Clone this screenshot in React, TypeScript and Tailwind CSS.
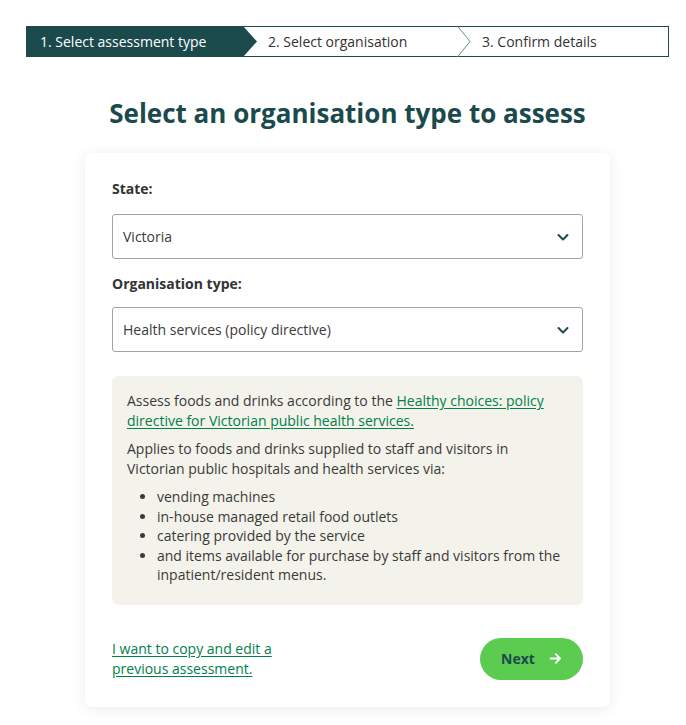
import React from "react";

const teal = "#1b4a4c";

function Chevron() {
  return (
    <svg width="14" height="14" viewBox="0 0 14 14" fill="none">
      <path d="M2.5 5 L7 9.5 L11.5 5" stroke={teal} strokeWidth="2" strokeLinecap="round" strokeLinejoin="round" />
    </svg>
  );
}

function Select({ value }: { value: string }) {
  return (
    <div className="flex h-[45px] items-center justify-between rounded-[3px] border border-[#a3a3a3] bg-white pl-[10px] pr-[12px] text-[14px] text-[#3a3a3a]">
      <span>{value}</span>
      <Chevron />
    </div>
  );
}

export default function App() {
  return (
    <div className="min-h-[725px] bg-white pt-[26px] text-[#333]" style={{ fontFamily: "'Open Sans', 'Noto Sans', sans-serif" }}>
      {/* Stepper */}
      <div className="ml-[26px] flex h-[31px] w-[643px] border border-[#1b4a4c] text-[14px]">
        <div className="relative flex w-[216px] items-center bg-[#1b4a4c] pl-[13px] text-white">
          <span>1. Select assessment type</span>
          <svg className="absolute left-[215px] top-[-1px]" width="15" height="31" viewBox="0 0 15 31">
            <polygon points="0,0 1,0 15,15.5 1,31 0,31" fill="#1b4a4c" />
          </svg>
        </div>
        <div className="relative flex w-[215px] items-center pl-[25px] text-[#333]">
          <span>2. Select organisation</span>
          <svg className="absolute right-[-13px] top-[-1px]" width="14" height="31" viewBox="0 0 14 31">
            <polyline points="0.5,0 13,15.5 0.5,31" fill="none" stroke="#6b8a8a" strokeWidth="1" />
          </svg>
        </div>
        <div className="flex flex-1 items-center pl-[24px] text-[#333]">
          <span>3. Confirm details</span>
        </div>
      </div>

      <div className="ml-[85px] w-[525px]">
        <h1 className="mt-[38px] text-center text-[26px] font-bold leading-[36px] text-[#1b4a4c]">
          Select an organisation type to assess
        </h1>

        <div className="mt-[22px] rounded-[6px] bg-white px-[27px] pb-[27px] pt-[26px] shadow-[0_2px_14px_rgba(0,0,0,0.08)]">
          <div className="text-[14px] font-bold leading-[20px] text-[#333]">State:</div>
          <div className="mt-[15px]">
            <Select value="Victoria" />
          </div>
          <div className="mt-[15px] text-[14px] font-bold leading-[20px] text-[#333]">Organisation type:</div>
          <div className="mt-[13px]">
            <Select value="Health services (policy directive)" />
          </div>

          <div className="mt-[24px] rounded-[6px] bg-[#f4f3eb] px-[15px] pb-[20px] pt-[15px] text-[14px] leading-[19.5px] text-[#3a3a3a]">
            <p>
              Assess foods and drinks according to the{" "}
              <a href="#" className="text-[#00804a] underline underline-offset-2">
                Healthy choices: policy directive for Victorian public health services.
              </a>
            </p>
            <p className="mt-[9px]">
              Applies to foods and drinks supplied to staff and visitors in Victorian public hospitals and health services via:
            </p>
            <ul className="mt-[9px] list-disc pl-[30px]">
              <li>vending machines</li>
              <li>in-house managed retail food outlets</li>
              <li>catering provided by the service</li>
              <li>and items available for purchase by staff and visitors from the inpatient/resident menus.</li>
            </ul>
          </div>

          <div className="mt-[30px] flex items-center justify-between">
            <a href="#" className="w-[180px] pt-[3px] text-[14px] leading-[19.5px] text-[#00804a] underline underline-offset-2">
              I want to copy and edit a previous assessment.
            </a>
            <button className="mt-[3px] flex h-[42px] w-[103px] items-center justify-center gap-[14px] rounded-full bg-[#5ccc50] text-[14px] font-bold text-[#1b4a4c]">
              <span>Next</span>
              <svg width="13" height="13" viewBox="0 0 13 13" fill="none">
                <path d="M1.5 6.5 H11 M6.8 2.2 L11 6.5 L6.8 10.8" stroke="white" strokeWidth="1.8" strokeLinecap="round" strokeLinejoin="round" />
              </svg>
            </button>
          </div>
        </div>
      </div>
    </div>
  );
}
